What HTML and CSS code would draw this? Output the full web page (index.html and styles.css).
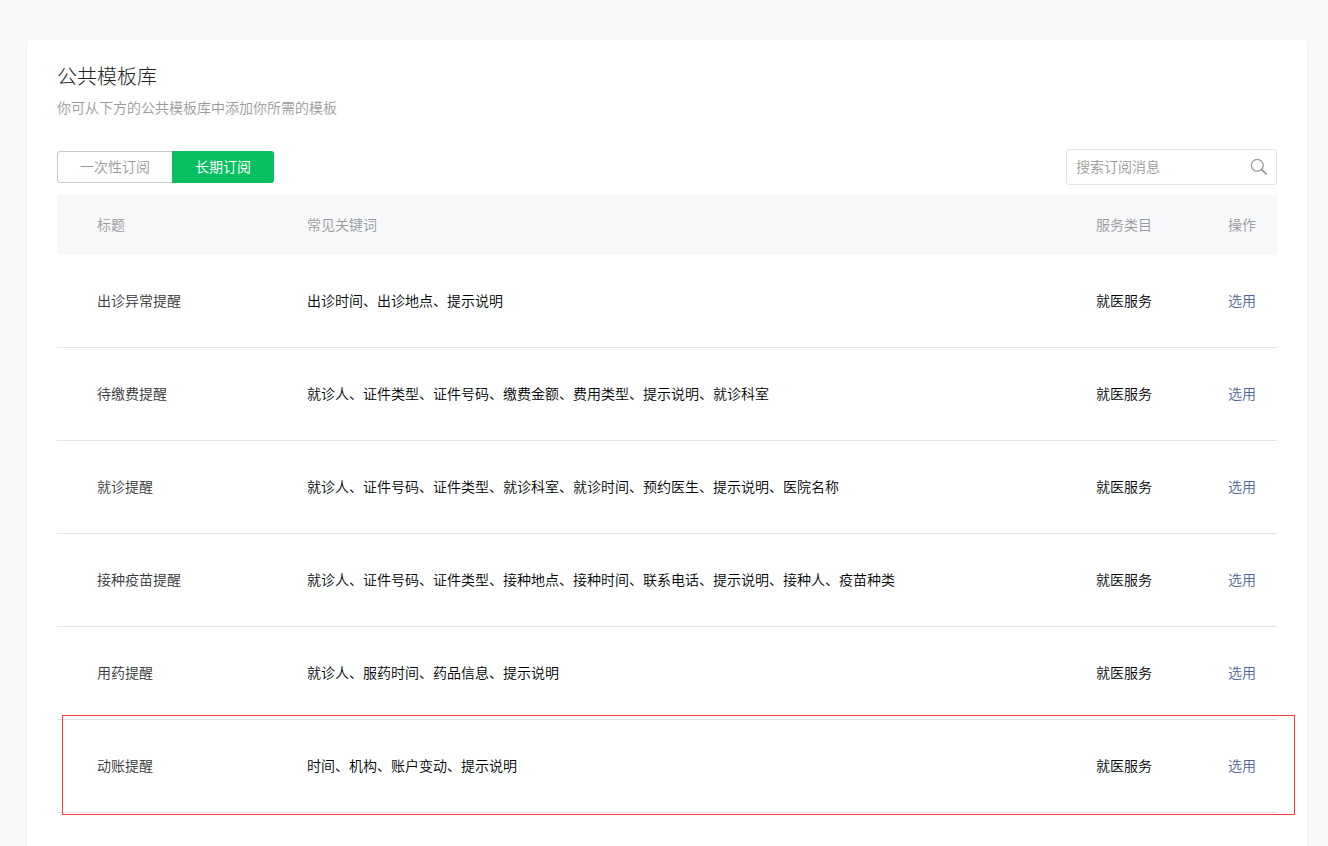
FILE: index.html
```html
<!DOCTYPE html>
<html lang="zh-CN">
<head>
<meta charset="utf-8">
<meta name="viewport" content="width=device-width, initial-scale=1">
<title>公共模板库</title>
<link rel="stylesheet" href="styles.css">
</head>
<body>
<main class="panel">
  <header class="panel-head">
    <h1 class="title">公共模板库</h1>
    <p class="desc">你可从下方的公共模板库中添加你所需的模板</p>
  </header>
  <div class="toolbar">
    <div class="tabs">
      <button class="tab" type="button">一次性订阅</button>
      <button class="tab tab-active" type="button">长期订阅</button>
    </div>
    <form class="search">
      <input class="search-input" type="text" placeholder="搜索订阅消息" aria-label="搜索订阅消息">
      <button class="search-btn" type="button" aria-label="搜索">
        <svg class="search-icon" width="18" height="18" viewBox="0 0 18 18" fill="none" stroke="#9a9a9a">
          <circle cx="7.3" cy="7.3" r="5.9" stroke-width="1.3"/>
          <path d="M11.3 11.3 16.6 16.4" stroke-width="1.9"/>
        </svg>
      </button>
    </form>
  </div>
  <table class="table">
    <thead>
      <tr><th class="col-title">标题</th><th>常见关键词</th><th class="col-category">服务类目</th><th class="col-action">操作</th></tr>
    </thead>
    <tbody>
      <tr><td class="col-title">出诊异常提醒</td><td>出诊时间、出诊地点、提示说明</td><td>就医服务</td><td class="col-action"><a class="link" href="#">选用</a></td></tr>
      <tr><td class="col-title">待缴费提醒</td><td>就诊人、证件类型、证件号码、缴费金额、费用类型、提示说明、就诊科室</td><td>就医服务</td><td class="col-action"><a class="link" href="#">选用</a></td></tr>
      <tr><td class="col-title">就诊提醒</td><td>就诊人、证件号码、证件类型、就诊科室、就诊时间、预约医生、提示说明、医院名称</td><td>就医服务</td><td class="col-action"><a class="link" href="#">选用</a></td></tr>
      <tr><td class="col-title">接种疫苗提醒</td><td>就诊人、证件号码、证件类型、接种地点、接种时间、联系电话、提示说明、接种人、疫苗种类</td><td>就医服务</td><td class="col-action"><a class="link" href="#">选用</a></td></tr>
      <tr><td class="col-title">用药提醒</td><td>就诊人、服药时间、药品信息、提示说明</td><td>就医服务</td><td class="col-action"><a class="link" href="#">选用</a></td></tr>
      <tr class="marked"><td class="col-title">动账提醒</td><td>时间、机构、账户变动、提示说明</td><td>就医服务</td><td class="col-action"><a class="link" href="#">选用</a></td></tr>
    </tbody>
  </table>
</main>
</body>
</html>
```
FILE: styles.css
```css
* {
  box-sizing: border-box;
}

body {
  display: flex;
  min-height: 100vh;
  margin: 0;
  padding: 40px 21px 0 27px;
  background: #f6f8fa;
  color: #000;
  font: 14px/20px "Noto Sans CJK SC", sans-serif;
  font-weight: 350;
}

button,
input {
  font: inherit;
}

.panel {
  flex: 1;
  min-width: 0;
  padding: 20px 30px 33px;
  border-radius: 4px 4px 0 0;
  background: #fff;
  box-shadow: 0 1px 2px rgba(0, 0, 0, 0.1);
}

.title {
  margin: 0;
  color: #222;
  font-size: 20px;
  font-weight: 300;
  line-height: 32px;
}

.desc {
  margin: 5px 0 0;
  color: #9a9a9a;
}

.toolbar {
  display: flex;
  align-items: center;
  justify-content: space-between;
  margin: 32px 0 10px;
}

.tabs {
  display: flex;
}

.tab {
  height: 32px;
  padding: 0 22px 2px;
  border: 1px solid #c9c9c9;
  border-right: 0;
  border-radius: 3px 0 0 3px;
  background: #fff;
  color: #9a9a9a;
}

.tab-active {
  padding: 0 23px 2px;
  border: 0;
  border-radius: 0 3px 3px 0;
  background: #07c160;
  color: #fff;
  font-weight: 400;
}

.search {
  display: flex;
  width: 211px;
  height: 36px;
  border: 1px solid #e4e4e4;
  border-radius: 3px;
}

.search-input {
  flex: 1;
  min-width: 0;
  padding: 0 9px 2px;
  border: 0;
  outline: 0;
  background: none;
}

.search-input::placeholder {
  color: #9a9a9a;
  opacity: 1;
}

.search-btn {
  display: flex;
  align-items: center;
  padding: 0 8px;
  border: 0;
  background: none;
}

.table {
  width: 100%;
  border-collapse: separate;
  border-spacing: 0;
  table-layout: fixed;
}

.table th {
  height: 60px;
  padding: 0 0 2px;
  background: #f6f8fa;
  color: #9a9a9a;
  font-weight: 350;
  text-align: left;
}

.table td {
  height: 93px;
  padding: 0 0 2px;
  border-bottom: 1px solid #e4e4e4;
}

.table .col-title {
  width: 250px;
  padding-left: 40px;
}

.table td.col-title {
  color: #353535;
}

.col-category {
  width: 132px;
}

.table .col-action {
  width: 49px;
  padding-right: 20px;
}

.link {
  color: #4f6696;
  text-decoration: none;
}

.marked {
  position: relative;
}

/* Frame around the highlighted row */
.marked .col-title::after {
  content: "";
  position: absolute;
  inset: -5px -18px -2px 5px;
  border: 1px solid #ff3a3a;
  pointer-events: none;
}
```
